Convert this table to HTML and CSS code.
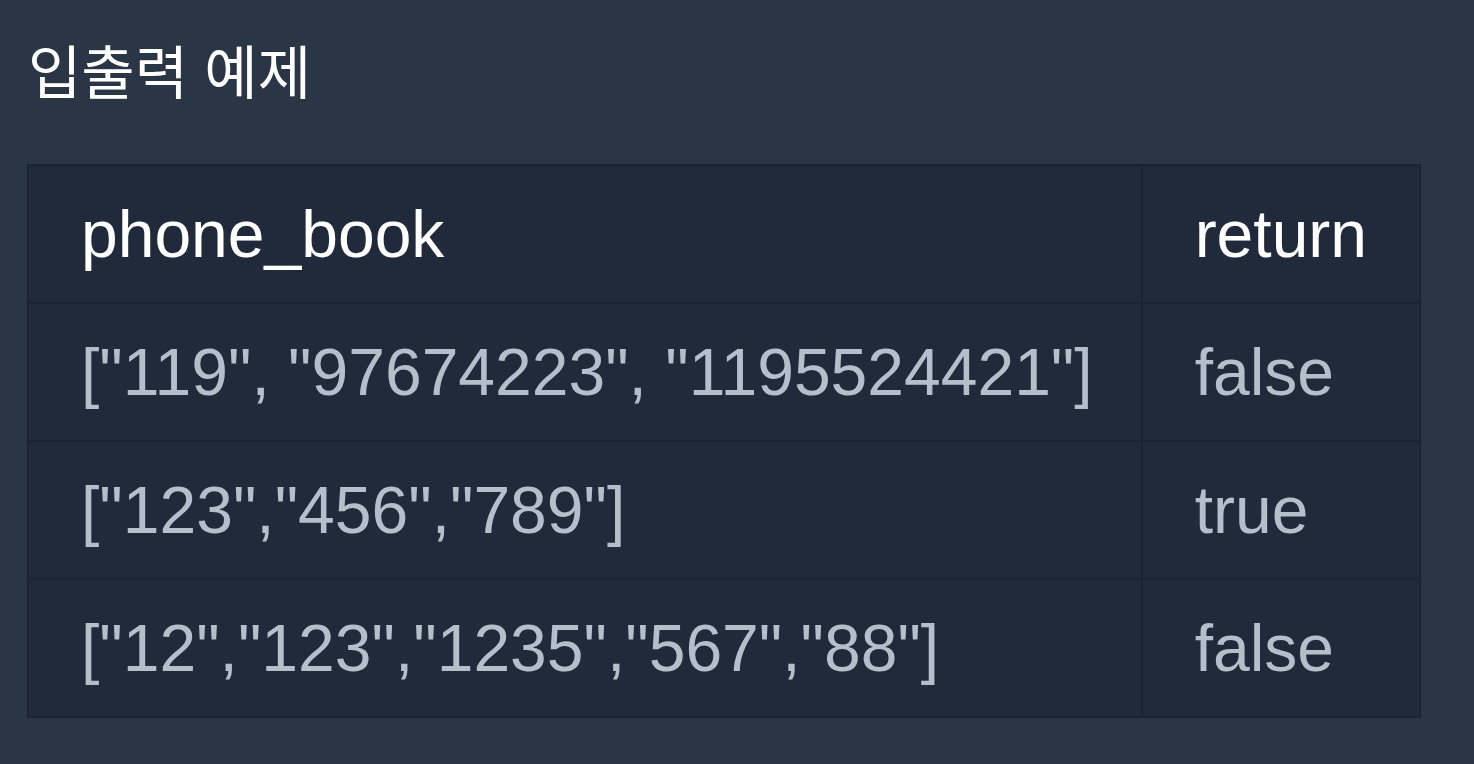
FILE: index.html
```html
<!DOCTYPE html>
<html lang="ko">
<head>
<meta charset="utf-8">
<link rel="stylesheet" href="styles.css">
</head>
<body>
<main class="page">
  <h3 class="title">입출력 예제</h3>
  <table class="examples">
    <thead>
      <tr><th>phone_book</th><th>return</th></tr>
    </thead>
    <tbody>
      <tr><td>["119", "97674223", "1195524421"]</td><td>false</td></tr>
      <tr><td>["123","456","789"]</td><td>true</td></tr>
      <tr><td>["12","123","1235","567","88"]</td><td>false</td></tr>
    </tbody>
  </table>
</main>
</body>
</html>
```
FILE: styles.css
```css
html, body {
  margin: 0;
  padding: 0;
  background: #2a3546;
}
.page {
  display: flex;
  flex-direction: column;
  align-items: flex-start;
  padding: 0 27px;
  height: 764px;
  box-sizing: border-box;
  font-family: "Liberation Sans", Arial, "Noto Sans CJK KR", sans-serif;
}
.title {
  margin: 30px 0 0 1px;
  font-family: "Noto Sans CJK KR", sans-serif;
  font-weight: 400;
  font-size: 58px;
  line-height: 78px;
  color: #ffffff;
}
.examples {
  margin-top: 56px;
  border-collapse: collapse;
  background: #212a3b;
  border: 2px solid #1b2332;
}
.examples th,
.examples td {
  border: 2px solid #1b2332;
  padding: 0 52px;
  height: 138px;
  box-sizing: border-box;
  font-size: 66px;
  text-align: left;
  white-space: nowrap;
}
.examples th:first-child,
.examples td:first-child {
  padding-right: 48px;
}
.examples th {
  font-weight: 400;
  color: #ffffff;
}
.examples td {
  color: #b4bfcb;
}
```
